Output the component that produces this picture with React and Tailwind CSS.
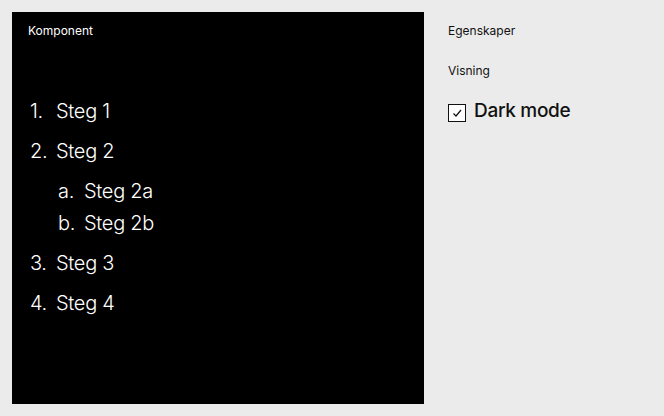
function Item({ marker, children, className = "" }) {
  return (
    <li className={`flex ${className}`}>
      <span className="w-[28px] shrink-0 pl-[2px]">{marker}</span>
      <div>{children}</div>
    </li>
  );
}

export default function App() {
  return (
    <div className="flex h-[416px] w-[664px] bg-[#ebebeb] p-3 font-['Inter',sans-serif]">
      <div className="flex h-[392px] w-[412px] flex-col bg-black px-4 pt-[12px] text-white">
        <div className="text-[12px] leading-[14px]">Komponent</div>
        <ol className="mt-[59px] text-[20px] leading-[28px] font-light tracking-[-0.3px]">
          <Item marker="1." className="pb-[12px]">Steg 1</Item>
          <Item marker="2." className="pb-[12px]">
            Steg 2
            <ol className="mt-[12px]">
              <Item marker="a." className="pb-[4px]">Steg 2a</Item>
              <Item marker="b.">Steg 2b</Item>
            </ol>
          </Item>
          <Item marker="3." className="pb-[12px]">Steg 3</Item>
          <Item marker="4.">Steg 4</Item>
        </ol>
      </div>
      <div className="ml-6 flex flex-col pt-[12px] text-[#111]">
        <div className="text-[12px] leading-[14px]">Egenskaper</div>
        <div className="mt-[26px] text-[12px] leading-[14px]">Visning</div>
        <label className="mt-[21px] flex items-center gap-2">
          <span className="mt-[3px] flex h-[18px] w-[18px] items-center justify-center border-[1.5px] border-[#111] bg-white">
            <svg width="12" height="12" viewBox="0 0 12 12" fill="none">
              <path d="M2.5 6.5 L5 9 L10 3" stroke="#111" strokeWidth="1.2" />
            </svg>
          </span>
          <span className="text-[19px] font-medium leading-[24px] tracking-[-0.3px]">Dark mode</span>
        </label>
      </div>
    </div>
  );
}
